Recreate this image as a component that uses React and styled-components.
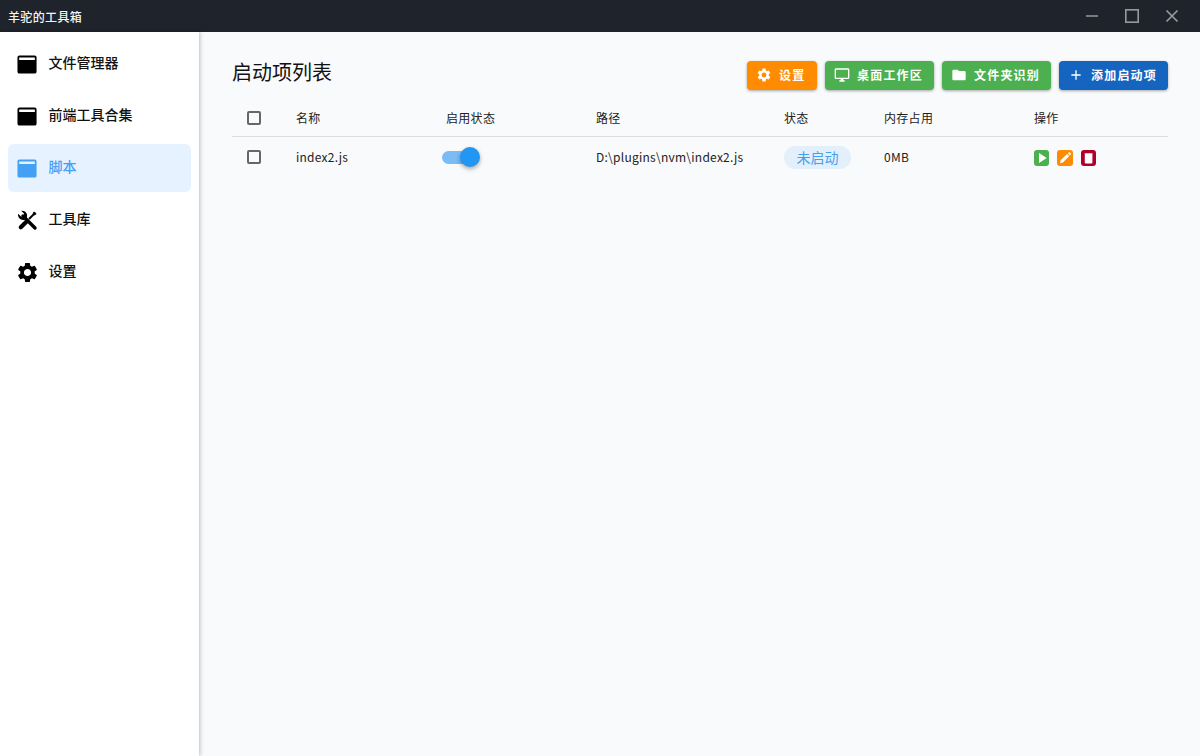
import React from 'react';
import styled, { createGlobalStyle } from 'styled-components';
import { MdAdd, MdFolder, MdOutlineDesktopWindows, MdSettings } from 'react-icons/md';

const GlobalStyle = createGlobalStyle`
  html, body {
    margin: 0;
    padding: 0;
    height: 100%;
    overflow: hidden;
    font-family: "Noto Sans CJK SC", "Noto Sans", sans-serif;
  }
  #root {
    height: 100%;
  }
`;

const Page = styled.div`
  display: flex;
  flex-direction: column;
  height: 756px;
  background: #f9fafc;
`;

const TitleBar = styled.header`
  display: flex;
  align-items: center;
  justify-content: space-between;
  flex: none;
  height: 32px;
  padding: 0 8px;
  background: #1f232b;
`;

const AppName = styled.div`
  font-size: 12px;
  font-weight: 500;
  letter-spacing: 0.35px;
  color: #f4f4f4;
`;

const WindowControls = styled.div`
  display: flex;
  height: 100%;
`;

const WindowButton = styled.div`
  display: flex;
  align-items: center;
  justify-content: center;
  width: 40px;
  color: #999;
`;

const Body = styled.div`
  display: flex;
  flex: 1;
  min-height: 0;
`;

const Sidebar = styled.nav`
  display: flex;
  flex-direction: column;
  flex: none;
  gap: 4px;
  box-sizing: border-box;
  width: 199px;
  padding: 8px;
  background: #fff;
  box-shadow: 1px 0 4px rgba(0, 0, 0, 0.25);
`;

const NavItem = styled.div`
  display: flex;
  align-items: center;
  gap: 12px;
  box-sizing: border-box;
  height: 48px;
  padding: 0 0 4px 8.5px;
  border-radius: 6px;
  font-size: 14px;
  font-weight: 500;
  color: ${(p) => (p.$active ? '#42a0f5' : '#111')};
  background: ${(p) => (p.$active ? '#e6f2ff' : 'transparent')};

  svg {
    flex: none;
    width: 21px;
    height: 21px;
    margin-top: 4px;
    margin-right: -1px;
    color: ${(p) => (p.$active ? '#42a0f5' : '#000')};
  }
`;

const Main = styled.main`
  flex: 1;
  min-width: 0;
  padding: 29px 32px 0 33px;
`;

const Header = styled.div`
  display: flex;
  align-items: center;
  justify-content: space-between;
  height: 29px;
  margin-bottom: 10px;
`;

const Title = styled.h1`
  margin: 0 0 9px;
  font-size: 20px;
  font-weight: 400;
  color: #111;
`;

const Actions = styled.div`
  display: flex;
  gap: 8px;
`;

const ActionButton = styled.button`
  display: flex;
  align-items: center;
  gap: 7px;
  box-sizing: border-box;
  width: ${(p) => p.$width}px;
  height: 29px;
  padding: 0 0 2px 9px;
  border: 0;
  border-radius: 4px;
  font-family: inherit;
  font-size: 12px;
  font-weight: 700;
  letter-spacing: 1.2px;
  color: #fff;
  background: ${(p) => p.$color};
  box-shadow: 0 1px 3px rgba(0, 0, 0, 0.35);

  svg {
    flex: none;
    width: 16px;
    height: 16px;
  }
`;

const TableRow = styled.div`
  display: grid;
  grid-template-columns: 64px 150px 150px 188px 100px 150px 1fr;
  align-items: center;
  height: ${(p) => (p.$head ? 36 : 41)}px;
  border-bottom: ${(p) => (p.$head ? '1px solid #dcdde0' : '0')};
  font-size: 12px;
  letter-spacing: ${(p) => (p.$head ? 0.3 : 0.25)}px;
  color: #222;
`;

const Cell = styled.div`
  padding-bottom: 2px;
`;

const Box = styled.span`
  display: block;
  box-sizing: border-box;
  width: 14px;
  height: 14px;
  margin: 0 0 1px 15px;
  border: 2px solid #666;
  border-radius: 2px;
`;

const Switch = styled.span`
  position: relative;
  display: block;
  width: 34px;
  height: 13px;
  margin-left: -4px;
  border-radius: 7px;
  background: #7abcf6;
`;

const Thumb = styled.span`
  position: absolute;
  top: -4px;
  right: -4px;
  width: 20px;
  height: 20px;
  border-radius: 50%;
  background: #2196f3;
  box-shadow: 0 2px 4px rgba(0, 0, 0, 0.35);
`;

const Chip = styled.span`
  display: inline-flex;
  align-items: center;
  justify-content: center;
  box-sizing: border-box;
  width: 67px;
  height: 23px;
  padding-bottom: 1px;
  border-radius: 12px;
  font-size: 14px;
  letter-spacing: 0;
  color: #42a0ee;
  background: #e3f0fb;
`;

const RowActions = styled.div`
  display: flex;
  gap: 8px;
  margin-top: 1px;
`;

const MiniIcon = styled.svg`
  display: block;
  width: ${(p) => p.$width}px;
  height: 16px;
  color: ${(p) => p.$color};
`;

const WindowIcon = () => (
  <svg viewBox="0 0 22 22">
    <path
      fillRule="evenodd"
      fill="currentColor"
      d="M2.5 1.5h16a2 2 0 0 1 2 2v15a2 2 0 0 1-2 2h-16a2 2 0 0 1-2-2v-15a2 2 0 0 1 2-2zM2.3 3.6v2.6h16.4V3.6z"
    />
  </svg>
);

const ToolsIcon = () => (
  <svg viewBox="0 0 21 21">
    <path d="M6 6l12 12" stroke="currentColor" strokeWidth="3.4" strokeLinecap="round" fill="none" />
    <path
      fill="currentColor"
      d="M1.2 3.8l3 3 2.4-.6.6-2.4-3-3A5 5 0 0 1 9.8 7.4L7.4 9.8A5 5 0 0 1 1.2 3.8z"
    />
    <path d="M18.4 2.6L12 9" stroke="currentColor" strokeWidth="2" fill="none" />
    <path d="M17 1.4l2.6 2.6-2.2 1.4-1.8-1.8z" fill="currentColor" />
    <path d="M9.6 11.4L3.8 17.2" stroke="currentColor" strokeWidth="4.2" strokeLinecap="round" fill="none" />
  </svg>
);

const navItems = [
  { label: '文件管理器', icon: <WindowIcon /> },
  { label: '前端工具合集', icon: <WindowIcon /> },
  { label: '脚本', icon: <WindowIcon />, active: true },
  { label: '工具库', icon: <ToolsIcon /> },
  { label: '设置', icon: <MdSettings viewBox="1.5 1.5 21 21" /> },
];

const buttons = [
  { label: '设置', icon: <MdSettings />, color: '#ff8c00', width: 70 },
  { label: '桌面工作区', icon: <MdOutlineDesktopWindows />, color: '#4caf50', width: 109 },
  { label: '文件夹识别', icon: <MdFolder />, color: '#4caf50', width: 109 },
  { label: '添加启动项', icon: <MdAdd />, color: '#1565c0', width: 109 },
];

const App = () => (
  <Page>
    <GlobalStyle />
    <TitleBar>
      <AppName>羊驼的工具箱</AppName>
      <WindowControls>
        <WindowButton>
          <svg width="14" height="14" viewBox="0 0 14 14">
            <path d="M1 7h12" stroke="currentColor" strokeWidth="1.5" />
          </svg>
        </WindowButton>
        <WindowButton>
          <svg width="16" height="16" viewBox="0 0 16 16">
            <rect x="1.8" y="1.8" width="12.4" height="12.4" fill="none" stroke="currentColor" strokeWidth="1.6" />
          </svg>
        </WindowButton>
        <WindowButton>
          <svg width="14" height="14" viewBox="0 0 14 14">
            <path d="M1.5 1.5l11 11M12.5 1.5l-11 11" stroke="currentColor" strokeWidth="1.7" />
          </svg>
        </WindowButton>
      </WindowControls>
    </TitleBar>
    <Body>
      <Sidebar>
        {navItems.map((item) => (
          <NavItem key={item.label} $active={item.active}>
            {item.icon}
            {item.label}
          </NavItem>
        ))}
      </Sidebar>
      <Main>
        <Header>
          <Title>启动项列表</Title>
          <Actions>
            {buttons.map((b) => (
              <ActionButton key={b.label} $color={b.color} $width={b.width}>
                {b.icon}
                {b.label}
              </ActionButton>
            ))}
          </Actions>
        </Header>
        <TableRow $head>
          <Box />
          <Cell>名称</Cell>
          <Cell>启用状态</Cell>
          <Cell>路径</Cell>
          <Cell>状态</Cell>
          <Cell>内存占用</Cell>
          <Cell>操作</Cell>
        </TableRow>
        <TableRow>
          <Box />
          <Cell>index2.js</Cell>
          <div>
            <Switch>
              <Thumb />
            </Switch>
          </div>
          <Cell>D:\plugins\nvm\index2.js</Cell>
          <div>
            <Chip>未启动</Chip>
          </div>
          <Cell>0MB</Cell>
          <RowActions>
            <MiniIcon viewBox="0 0 15 16" $width={15} $color="#4caf50">
              <rect width="15" height="16" rx="3" fill="currentColor" />
              <path d="M5 3v10l7.7-5z" fill="#fff" />
            </MiniIcon>
            <MiniIcon viewBox="0 0 16 16" $width={16} $color="#ff8c00">
              <rect width="16" height="16" rx="3" fill="currentColor" />
              <path d="M3 13.2l.7-2.9 6.4-6.4 2.2 2.2-6.4 6.4zM10.8 3.2l.8-.8a.9.9 0 0 1 1.3 0l.9.9a.9.9 0 0 1 0 1.3l-.8.8z" fill="#fff" />
            </MiniIcon>
            <MiniIcon viewBox="0 0 15 16" $width={15} $color="#b0002a">
              <rect width="15" height="16" rx="3" fill="currentColor" />
              <rect x="3.8" y="3" width="7.6" height="10.6" rx="1" fill="#fff" />
              <path d="M3.8 3.6h7.6" stroke="#e8b5c0" strokeWidth="1" />
            </MiniIcon>
          </RowActions>
        </TableRow>
      </Main>
    </Body>
  </Page>
);

export default App;
